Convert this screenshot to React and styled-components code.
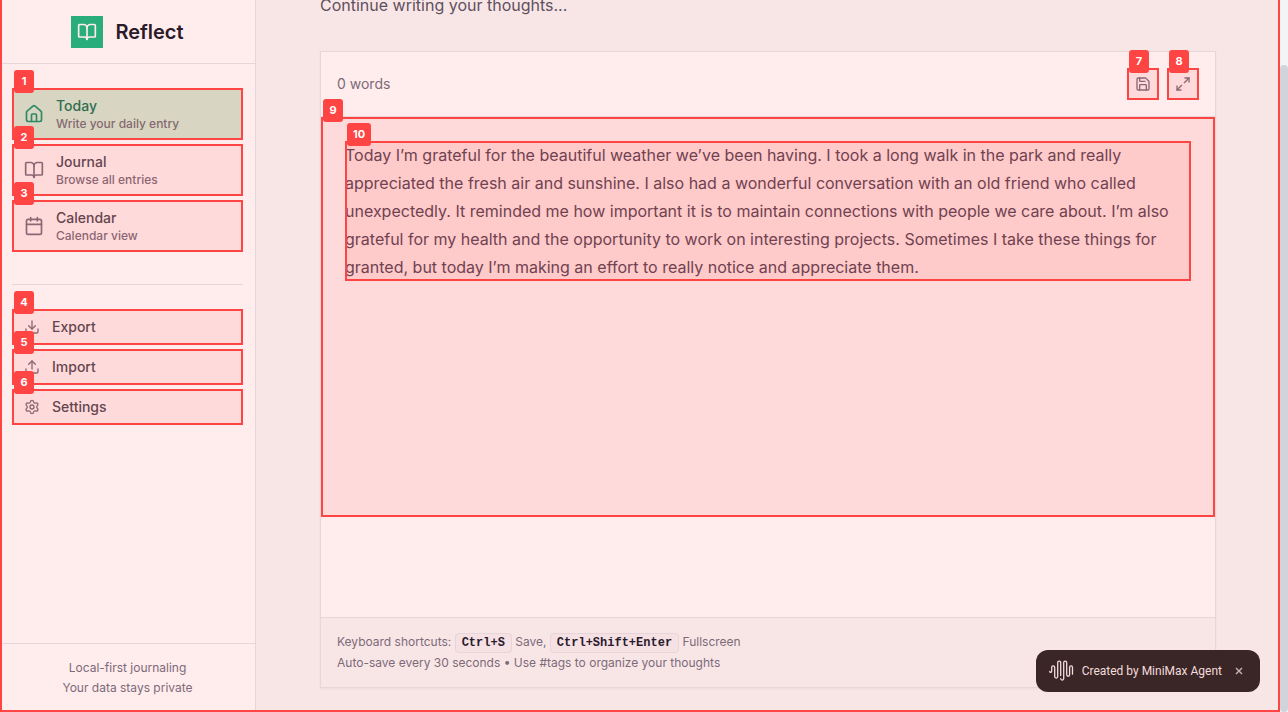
import React from 'react';
import styled, { createGlobalStyle } from 'styled-components';
import { BookOpen, House, Calendar, Download, Upload, Settings, Save, Maximize2 } from 'lucide-react';

const GlobalStyle = createGlobalStyle`
  *, *::before, *::after { box-sizing: border-box; }
  body {
    margin: 0;
    background: #f8e6e6;
    font-family: Inter, "Liberation Sans", sans-serif;
    overflow: hidden;
  }
  p, h1 { margin: 0; }
  button { font: inherit; border: 0; cursor: pointer; }
`;

const RED = '#ff4444';
const LINE = '#e8d5da';

const Page = styled.div`
  display: flex;
  height: 100vh;
  overflow: hidden;
`;

const Frame = styled.div`
  position: relative;
  display: flex;
  flex: 1;
  min-width: 0;
  &::after {
    content: '';
    position: absolute;
    inset: 0;
    z-index: 5;
    border: solid ${RED};
    border-width: 0 2px 2px;
    pointer-events: none;
  }
`;

const ScrollTrack = styled.div`
  flex: none;
  display: flex;
  width: 8px;
  padding-top: 65px;
  background: #f3f4f6;
`;

const ScrollThumb = styled.div`
  flex: 1;
  border-radius: 4px;
  background: #d1d5db;
`;

const Sidebar = styled.aside`
  display: flex;
  flex: none;
  flex-direction: column;
  width: 256px;
  background: #ffecec;
  border-right: 1px solid ${LINE};
`;

const Brand = styled.header`
  display: flex;
  align-items: center;
  justify-content: center;
  gap: 12px;
  height: 64px;
  border-bottom: 1px solid ${LINE};
`;

const BrandMark = styled.span`
  display: grid;
  place-items: center;
  width: 32px;
  height: 32px;
  background: #29ad7a;
  color: #ffecec;
`;

const BrandName = styled.h1`
  color: #2a1a2a;
  font-size: 20px;
  font-weight: 600;
  line-height: 28px;
`;

const Nav = styled.nav`
  display: flex;
  flex: 1;
  flex-direction: column;
  padding: 24px 12px;
`;

const NavGroup = styled.div`
  display: flex;
  flex-direction: column;
  gap: 4px;
  & + & {
    margin-top: 32px;
    padding-top: 24px;
    border-top: 1px solid ${LINE};
  }
`;

const NavItem = styled.button`
  position: relative;
  display: flex;
  align-items: center;
  gap: 12px;
  height: ${(p) => (p.$small ? 36 : 52)}px;
  padding: 0 12px;
  background: ${(p) => (p.$active ? '#d9d5c3' : '#ffdada')};
  color: ${(p) => (p.$active ? '#2f8a63' : '#8c6673')};
  outline: 2px solid ${RED};
  outline-offset: -2px;
  text-align: left;
`;

const NavText = styled.span`
  display: flex;
  flex-direction: column;
`;

const NavTitle = styled.span`
  color: ${(p) => (p.$active ? '#2f6e50' : '#64454f')};
  font-size: 14px;
  font-weight: 500;
  line-height: 20px;
`;

const NavHint = styled.span`
  color: ${(p) => (p.$active ? '#84696f' : '#8c6673')};
  font-size: 12px;
  font-weight: 500;
  line-height: 16px;
`;

const SideFooter = styled.footer`
  display: flex;
  flex-direction: column;
  gap: 4px;
  padding: 16px;
  border-top: 1px solid ${LINE};
  color: #7d6a79;
  font-size: 12px;
  line-height: 16px;
  text-align: center;
`;

const Tag = styled.span`
  position: absolute;
  top: -18px;
  left: 2px;
  z-index: 3;
  min-width: 20px;
  padding: 0 6px;
  border-radius: 3px;
  background: ${RED};
  color: #fff;
  font-family: Inter, "Liberation Sans", sans-serif;
  font-size: 11px;
  font-weight: 700;
  line-height: 23px;
  text-align: center;
`;

const Main = styled.main`
  flex: 1;
  min-width: 0;
  padding: 0 64px;
  overflow: hidden;
  background: #f8e6e6;
`;

const Intro = styled.p`
  margin: -7px 0 34px;
  color: #5f5060;
  font-size: 16px;
  line-height: 24px;
`;

const Card = styled.section`
  border: 1px solid ${LINE};
  background: #ffecec;
  box-shadow: 0 1px 2px rgba(60, 20, 30, 0.05);
`;

const Toolbar = styled.div`
  display: flex;
  align-items: center;
  gap: 8px;
  padding: 16px;
  border-bottom: 1px solid ${LINE};
`;

const WordCount = styled.span`
  flex: 1;
  color: #7d6a79;
  font-size: 14px;
  line-height: 20px;
`;

const ToolButton = styled.button`
  position: relative;
  display: grid;
  place-items: center;
  width: 32px;
  height: 32px;
  padding: 0;
  background: #ffdada;
  color: #8c6673;
  outline: 2px solid ${RED};
  outline-offset: -2px;
`;

const EditorArea = styled.div`
  height: 500px;
`;

const Editor = styled.div`
  position: relative;
  height: 400px;
  padding: 24px;
  background: #ffdada;
  outline: 2px solid ${RED};
  outline-offset: -2px;
`;

const Entry = styled.div`
  position: relative;
  display: flex;
`;

const EntryText = styled.textarea`
  flex: 1;
  height: 140px;
  padding: 0;
  border: 0;
  background: #ffcaca;
  color: #704250;
  font: 400 16px/28px Inter, "Liberation Sans", sans-serif;
  outline: 2px solid ${RED};
  outline-offset: -2px;
  overflow: hidden;
  resize: none;
`;

const CardFooter = styled.footer`
  display: flex;
  flex-direction: column;
  gap: 4px;
  padding: 16px;
  border-top: 1px solid ${LINE};
  background: #f8e6e6;
  color: #7d6a79;
  font-size: 12px;
  line-height: 16px;
`;

const Shortcuts = styled.p`
  height: 17px;
`;

const Key = styled.kbd`
  padding: 2px 6px;
  border: 1px solid ${LINE};
  border-radius: 4px;
  background: #f5e1e3;
  color: #2b1a2d;
  font-family: "Liberation Mono", monospace;
  font-size: 12px;
  font-weight: 700;
`;

const Toast = styled.div`
  position: fixed;
  right: 28px;
  bottom: 20px;
  z-index: 6;
  display: flex;
  align-items: center;
  gap: 8px;
  height: 42px;
  padding: 0 12px;
  border-radius: 12px;
  background: #3a2626;
  color: #f3dcdc;
  font: 400 12px/16px Roboto, sans-serif;
`;

const CloseButton = styled.button`
  display: grid;
  place-items: center;
  width: 18px;
  height: 18px;
  padding: 0;
  background: none;
  color: #cbb4b4;
`;

const WaveLogo = () => (
  <svg width="26" height="22" viewBox="-1 0 26 22" fill="none" stroke="currentColor" strokeWidth="1.3" strokeLinecap="round" aria-hidden="true">
    <path d="M.7 11.3c.2 1.6 2 1.5 2-.3V7.4a1.5 1.5 0 0 1 3 0v9.2a1.5 1.5 0 0 0 3 0V2.6a1.5 1.5 0 0 1 3 0v13" />
    <path d="M11.7 18.6a1.5 1.5 0 0 0 3 0V2.6a1.5 1.5 0 0 1 3 0v12.2a1.4 1.4 0 0 0 2.9 0V7.4a1.4 1.4 0 0 1 2.9 0v6.8" />
  </svg>
);

const PAGES = [
  { tag: 1, title: 'Today', hint: 'Write your daily entry', icon: House, active: true },
  { tag: 2, title: 'Journal', hint: 'Browse all entries', icon: BookOpen },
  { tag: 3, title: 'Calendar', hint: 'Calendar view', icon: Calendar },
];

const ACTIONS = [
  { tag: 4, title: 'Export', icon: Download },
  { tag: 5, title: 'Import', icon: Upload },
  { tag: 6, title: 'Settings', icon: Settings },
];

const ENTRY =
  'Today I’m grateful for the beautiful weather we’ve been having. I took a long walk in the park and really appreciated the fresh air and sunshine. I also had a wonderful conversation with an old friend who called unexpectedly. It reminded me how important it is to maintain connections with people we care about. I’m also grateful for my health and the opportunity to work on interesting projects. Sometimes I take these things for granted, but today I’m making an effort to really notice and appreciate them.';

export default function App() {
  return (
    <Page>
      <GlobalStyle />
      <Frame>
        <Sidebar>
          <Brand>
            <BrandMark><BookOpen size={20} /></BrandMark>
            <BrandName>Reflect</BrandName>
          </Brand>
          <Nav>
            <NavGroup>
              {PAGES.map(({ tag, title, hint, icon: Icon, active }) => (
                <NavItem key={tag} $active={active}>
                  <Tag>{tag}</Tag>
                  <Icon size={20} />
                  <NavText>
                    <NavTitle $active={active}>{title}</NavTitle>
                    <NavHint $active={active}>{hint}</NavHint>
                  </NavText>
                </NavItem>
              ))}
            </NavGroup>
            <NavGroup>
              {ACTIONS.map(({ tag, title, icon: Icon }) => (
                <NavItem key={tag} $small>
                  <Tag>{tag}</Tag>
                  <Icon size={16} />
                  <NavTitle>{title}</NavTitle>
                </NavItem>
              ))}
            </NavGroup>
          </Nav>
          <SideFooter>
            <p>Local-first journaling</p>
            <p>Your data stays private</p>
          </SideFooter>
        </Sidebar>
        <Main>
          <Intro>Continue writing your thoughts...</Intro>
          <Card>
            <Toolbar>
              <WordCount>0 words</WordCount>
              <ToolButton aria-label="Save"><Tag>7</Tag><Save size={16} /></ToolButton>
              <ToolButton aria-label="Fullscreen"><Tag>8</Tag><Maximize2 size={16} /></ToolButton>
            </Toolbar>
            <EditorArea>
              <Editor>
                <Tag>9</Tag>
                <Entry>
                  <Tag>10</Tag>
                  <EntryText aria-label="Journal entry" defaultValue={ENTRY} spellCheck={false} />
                </Entry>
              </Editor>
            </EditorArea>
            <CardFooter>
              <Shortcuts>
                Keyboard shortcuts: <Key>Ctrl+S</Key> Save, <Key>Ctrl+Shift+Enter</Key> Fullscreen
              </Shortcuts>
              <p>Auto-save every 30 seconds • Use #tags to organize your thoughts</p>
            </CardFooter>
          </Card>
        </Main>
      </Frame>
      <ScrollTrack><ScrollThumb /></ScrollTrack>
      <Toast>
        <WaveLogo />
        <span>Created by MiniMax Agent</span>
        <CloseButton aria-label="Close">
          <svg width="8" height="8" viewBox="0 0 8 8" fill="none" stroke="currentColor" strokeWidth="1.4" aria-hidden="true">
            <path d="M1 1l6 6M7 1L1 7" />
          </svg>
        </CloseButton>
      </Toast>
    </Page>
  );
}
